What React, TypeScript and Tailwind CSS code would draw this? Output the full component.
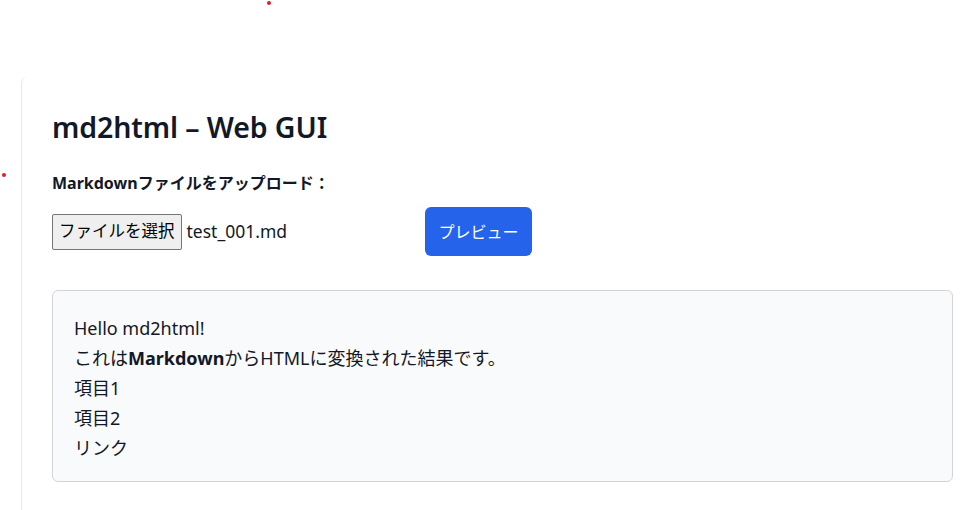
export default function App() {
  return (
    <div
      className="relative w-[978px] h-[510px] overflow-hidden bg-white text-[#111827]"
      style={{ fontFamily: '"Noto Sans", "Noto Sans CJK JP", sans-serif' }}
    >
      {/* stray red dots */}
      <span className="absolute left-[267px] top-[1px] w-[4px] h-[4px] rounded-full bg-[#e0201f]" />
      <span className="absolute left-[2px] top-[173px] w-[4px] h-[4px] rounded-full bg-[#e0201f]" />

      <div className="pt-[77px] pl-[21px]">
        <div className="w-[962px] rounded-tl-md border-l border-[#e5e7eb] bg-white pt-[32px] pl-[30px] pr-[30px] pb-8">
          <h1 className="text-[28.5px] leading-[36px] font-semibold tracking-[-0.1px]">
            md2html – Web GUI
          </h1>

          <label className="block mt-[26px] text-[16px] leading-6 font-bold">
            Markdownファイルをアップロード：
          </label>

          <div className="flex items-center mt-[12px]">
            <div className="flex items-center w-[373px] text-[17px]">
              <span className="inline-flex items-center h-[36px] px-[6px] border border-[#767676] rounded-[2px] bg-[#efefef] text-black text-[16.5px]">
                ファイルを選択
              </span>
              <span className="ml-[5px] text-[17.5px]">test_001.md</span>
            </div>
            <button className="h-[49px] w-[107px] rounded-md bg-[#2563eb] text-white text-[16px]">
              プレビュー
            </button>
          </div>

          <div className="mt-[34px] rounded-md border border-[#d4d4d8] bg-[#f9fafb] px-[21px] pt-[22px] pb-[18px] text-[18px] leading-[30px]">
            <p>Hello md2html!</p>
            <p>
              これは<strong className="font-bold">Markdown</strong>からHTMLに変換された結果です。
            </p>
            <p>項目1</p>
            <p>項目2</p>
            <p>リンク</p>
          </div>
        </div>
      </div>
    </div>
  );
}
